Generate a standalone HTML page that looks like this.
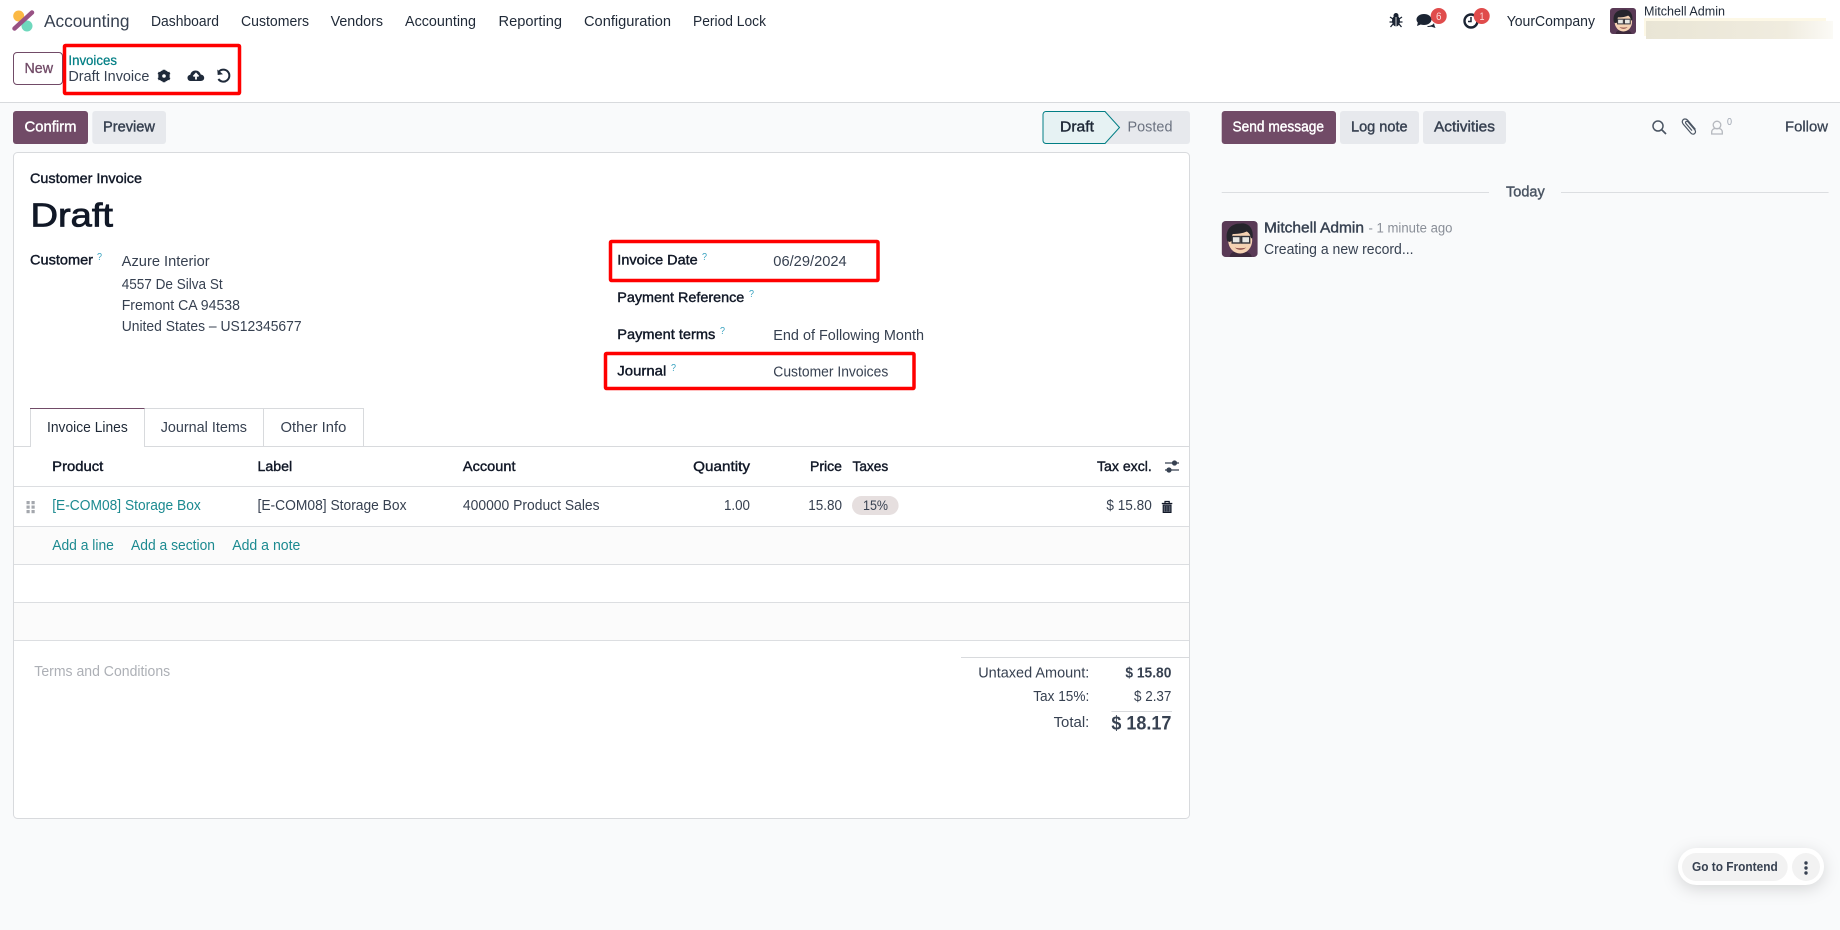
<!DOCTYPE html>
<html lang="en"><head><meta charset="utf-8"><title>Draft Invoice</title>
<style>
html,body{margin:0;padding:0;width:1840px;height:930px;overflow:hidden;background:#f9fafb}
svg{display:block}
text{font-family:"Liberation Sans",sans-serif;font-size:14.5px;fill:#374151}
.n{fill:#1f2937}
.b{fill:#1f2937;stroke:#1f2937;stroke-width:.4}
.h{fill:#111827;stroke:#111827;stroke-width:.4;font-size:14px}
.t{fill:#017e84}
.bt{fill:#374151;stroke:#374151;stroke-width:.4}
.w{fill:#fff;stroke:#fff;stroke-width:.4}
.q{fill:#3aa3c0;font-size:10px}
</style></head><body>
<svg width="1840" height="930" viewBox="0 0 1840 930" xmlns="http://www.w3.org/2000/svg">
<defs>
<linearGradient id="bl" x1="0" x2="1"><stop offset="0" stop-color="#e9e5d5"/><stop offset=".75" stop-color="#f0ecdf"/><stop offset="1" stop-color="#fbfaf6"/></linearGradient>
<symbol id="av" viewBox="0 0 36 36">
<rect width="36" height="36" rx="4" fill="#5a3a56"/>
<path d="M8 36c0-4 4-6 10-6s12 2 12 6z" fill="#3d2a3c"/>
<ellipse cx="18.500" cy="19.500" rx="12" ry="13" fill="#f5d2b3"/>
<path d="M5.500 20C3 9 9 2.500 19 2.500c6-1 13 3 12 14l-1.500 1c-1-4-2.500-6-4.500-7-4 2-10 2.500-14 2.500-1 2-1 5-1 7l-2 1z" fill="#26252c"/>
<rect x="10.500" y="15.500" width="8" height="6.500" fill="#e8e8e4" stroke="#33333a" stroke-width="1.400"/>
<rect x="20" y="15.500" width="8" height="6.500" fill="#e8e8e4" stroke="#33333a" stroke-width="1.400"/>
<path d="M13 26.500c3.500 3 8 3 11.500 0-3.500 1-8 1-11.500 0z" fill="#8b4a45"/>
</symbol>
</defs>

<!-- top area -->
<rect x="0" y="0" width="1840" height="102" fill="#fff"/>
<rect x="0" y="102" width="1840" height="1" fill="#d8dadd"/>

<!-- logo -->
<circle cx="18.700" cy="16" r="5.500" fill="#fbb945"/>
<circle cx="27" cy="26" r="5.500" fill="#6fd8bd"/>
<path d="M14.500 28.500L32 12.500" stroke="#985184" stroke-width="4.500" stroke-linecap="round"/>

<!-- nav -->
<text x="44" y="27" textLength="85.500" lengthAdjust="spacingAndGlyphs" style="font-size:17.500px">Accounting</text>
<text class="n" x="151" y="26" textLength="68" lengthAdjust="spacingAndGlyphs">Dashboard</text>
<text class="n" x="241" y="26" textLength="68" lengthAdjust="spacingAndGlyphs">Customers</text>
<text class="n" x="330.600" y="26" textLength="52.400" lengthAdjust="spacingAndGlyphs">Vendors</text>
<text class="n" x="405" y="26" textLength="71" lengthAdjust="spacingAndGlyphs">Accounting</text>
<text class="n" x="498.500" y="26" textLength="63.500" lengthAdjust="spacingAndGlyphs">Reporting</text>
<text class="n" x="584" y="26" textLength="87" lengthAdjust="spacingAndGlyphs">Configuration</text>
<text class="n" x="693" y="26" textLength="73" lengthAdjust="spacingAndGlyphs">Period Lock</text>

<!-- systray -->
<g fill="#1b2433">
<ellipse cx="1396" cy="21" rx="4" ry="5.500"/><circle cx="1396" cy="15.500" r="2.500"/>
<path d="M1390 17l3 2M1402 17l-3 2M1389.500 22h3M1402.500 22h-3M1390.500 27l2.500-3M1401.500 27l-2.500-3" stroke="#1b2433" stroke-width="1.300" fill="none"/>
<path d="M1396 17v9.500" stroke="#fff" stroke-width=".8"/>
<ellipse cx="1424" cy="19.500" rx="7.500" ry="5.500"/><path d="M1418 22l-1 4 5-2z"/>
<path d="M1427 26c3 0 6-1 7-3l.5 2.500 1 2.500-4-1.200-3.500.2z"/>
</g>
<circle cx="1471" cy="21" r="6.500" fill="none" stroke="#1b2433" stroke-width="2.400"/>
<path d="M1471 17v4.500h-3" fill="none" stroke="#1b2433" stroke-width="1.500"/>
<circle cx="1438.700" cy="16" r="8" fill="#e04c4c"/>
<text x="1436" y="20" textLength="5.500" lengthAdjust="spacingAndGlyphs" style="fill:#fbd9d9;font-size:11px">6</text>
<circle cx="1481.700" cy="16" r="8" fill="#e04c4c"/>
<text x="1479.500" y="20" textLength="5" lengthAdjust="spacingAndGlyphs" style="fill:#fbd9d9;font-size:11px">1</text>
<text class="n" x="1506.700" y="26" textLength="88.300" lengthAdjust="spacingAndGlyphs">YourCompany</text>
<use href="#av" x="1610" y="8" width="26" height="26"/>
<text class="n" x="1644" y="15.500" textLength="81" lengthAdjust="spacingAndGlyphs" style="font-size:13px">Mitchell Admin</text>
<rect x="1644" y="18" width="182" height="18" fill="#fdf8e6"/>
<rect x="1646" y="21" width="187" height="18" fill="url(#bl)"/>

<!-- control panel -->
<rect x="13.500" y="52.500" width="49" height="32" rx="3.500" fill="#fff" stroke="#714b67"/>
<text x="24.500" y="73" textLength="28.500" lengthAdjust="spacingAndGlyphs" style="fill:#714b67;stroke:#714b67;stroke-width:.3">New</text>
<text x="68.400" y="65" textLength="48.600" lengthAdjust="spacingAndGlyphs" style="fill:#017e84;stroke:#017e84;stroke-width:.25;font-size:13.500px">Invoices</text>
<text x="68.400" y="81" textLength="81" lengthAdjust="spacingAndGlyphs" style="fill:#374151">Draft Invoice</text>
<!-- gear -->
<circle cx="164" cy="76" r="4" fill="none" stroke="#1f2a3a" stroke-width="3.400"/>
<path d="M164 69.800v12.400M158.200 72.800l11.600 6.400M158.200 79.200l11.600-6.400" stroke="#1f2a3a" stroke-width="2.600"/>
<circle cx="164" cy="76" r="1.800" fill="#fff"/>
<!-- cloud -->
<path d="M190.500 81c-2 0-3-1.500-3-3.200 0-1.700 1.200-2.800 2.800-3 .5-2.600 2.700-4.300 5.200-4.300 2.600 0 4.600 1.700 5.200 4 1.900.2 3.500 1.500 3.500 3.400 0 1.900-1.500 3.100-3.400 3.100z" fill="#1f2a3a"/>
<path d="M196 79.500v-5M193.500 76.500l2.500-2.800 2.500 2.800" fill="none" stroke="#fff" stroke-width="1.800"/>
<!-- undo -->
<path d="M219 71.500a6 6 0 1 1-.6 7.500" fill="none" stroke="#1f2a3a" stroke-width="2"/>
<path d="M217.300 69.500l.4 5.500 5.300-.8z" fill="#1f2a3a"/>

<!-- action buttons -->
<rect x="13" y="111" width="75" height="33" rx="3" fill="#714b67"/>
<text class="w" x="24.500" y="131.500" textLength="52" lengthAdjust="spacingAndGlyphs">Confirm</text>
<rect x="92.300" y="111" width="73.700" height="33" rx="3" fill="#e7e9ed"/>
<text class="bt" x="103" y="131.500" textLength="52" lengthAdjust="spacingAndGlyphs">Preview</text>

<!-- status bar -->
<rect x="1100" y="111" width="90" height="33" rx="3" fill="#e7e9ed"/>
<path d="M1105 111.500H1046a3 3 0 0 0-3 3v26a3 3 0 0 0 3 3h59l14.500-16z" fill="#e6f2f3" stroke="#017e84"/>
<text class="b" x="1060" y="131.500" textLength="34" lengthAdjust="spacingAndGlyphs">Draft</text>
<text x="1127.500" y="131.500" textLength="45" lengthAdjust="spacingAndGlyphs" style="fill:#6b7280">Posted</text>

<!-- chatter buttons -->
<rect x="1221.700" y="111" width="114.300" height="33" rx="3" fill="#714b67"/>
<text class="w" x="1232.500" y="131.500" textLength="91.500" lengthAdjust="spacingAndGlyphs">Send message</text>
<rect x="1340" y="111" width="79" height="33" rx="3" fill="#e7e9ed"/>
<text class="bt" x="1351" y="131.500" textLength="56.600" lengthAdjust="spacingAndGlyphs">Log note</text>
<rect x="1423" y="111" width="83" height="33" rx="3" fill="#e7e9ed"/>
<text class="bt" x="1434" y="131.500" textLength="61" lengthAdjust="spacingAndGlyphs">Activities</text>
<!-- search -->
<circle cx="1658" cy="126" r="5" fill="none" stroke="#4b5563" stroke-width="1.500"/>
<path d="M1661.500 129.500l4.500 4.500" stroke="#4b5563" stroke-width="1.700"/>
<!-- clip -->
<path d="M1695.500 129.500l-8-9.500c-1.500-1.500-4-1.300-4.800.3-.8 1.400-.4 2.700.6 3.900l7.500 8.800c1 1.200 2.600 1.500 3.800.6 1.200-1 1.200-2.500.2-3.700l-6.800-8c-.6-.7-1.400-.8-2-.3-.6.500-.5 1.300 0 2l6 7" fill="none" stroke="#4b5563" stroke-width="1.200"/>
<!-- user -->
<circle cx="1717" cy="125" r="3.800" fill="none" stroke="#b5b8be" stroke-width="1.300"/>
<path d="M1711.700 134v-2c0-2.200 1.800-3.500 3.500-3.500h3.600c1.700 0 3.500 1.300 3.500 3.500v2z" fill="none" stroke="#b5b8be" stroke-width="1.300"/>
<text x="1727" y="125" textLength="5" lengthAdjust="spacingAndGlyphs" style="fill:#9ca3af;font-size:10px">0</text>
<text class="bt" x="1785" y="131.500" textLength="43" lengthAdjust="spacingAndGlyphs" style="stroke-width:.25">Follow</text>

<!-- sheet -->
<rect x="13.500" y="152.500" width="1176" height="666" rx="4" fill="#fff" stroke="#d8dadd"/>
<text class="h" x="30" y="183" textLength="112" lengthAdjust="spacingAndGlyphs">Customer Invoice</text>
<text x="30.500" y="226.500" textLength="82.500" lengthAdjust="spacingAndGlyphs" style="font-size:33px;fill:#111827;stroke:#111827;stroke-width:.8">Draft</text>

<text class="h" x="30" y="264.500" textLength="63" lengthAdjust="spacingAndGlyphs">Customer</text>
<text class="q" x="97" y="260" textLength="5" lengthAdjust="spacingAndGlyphs">?</text>
<text x="121.700" y="266" textLength="88" lengthAdjust="spacingAndGlyphs">Azure Interior</text>
<text x="121.700" y="289" textLength="101" lengthAdjust="spacingAndGlyphs">4557 De Silva St</text>
<text x="121.700" y="310" textLength="118.300" lengthAdjust="spacingAndGlyphs">Fremont CA 94538</text>
<text x="121.700" y="331" textLength="179.900" lengthAdjust="spacingAndGlyphs">United States – US12345677</text>

<text class="h" x="617.300" y="264.500" textLength="80.400" lengthAdjust="spacingAndGlyphs">Invoice Date</text>
<text class="q" x="702" y="260" textLength="5" lengthAdjust="spacingAndGlyphs">?</text>
<text x="773.300" y="266" textLength="73.400" lengthAdjust="spacingAndGlyphs">06/29/2024</text>
<text class="h" x="617.300" y="302" textLength="127" lengthAdjust="spacingAndGlyphs">Payment Reference</text>
<text class="q" x="749" y="297" textLength="5" lengthAdjust="spacingAndGlyphs">?</text>
<text class="h" x="617.300" y="339" textLength="98" lengthAdjust="spacingAndGlyphs">Payment terms</text>
<text class="q" x="720" y="334" textLength="5" lengthAdjust="spacingAndGlyphs">?</text>
<text x="773.300" y="340" textLength="150.700" lengthAdjust="spacingAndGlyphs">End of Following Month</text>
<text class="h" x="617.300" y="375.500" textLength="49" lengthAdjust="spacingAndGlyphs">Journal</text>
<text class="q" x="671" y="371" textLength="5" lengthAdjust="spacingAndGlyphs">?</text>
<text x="773.300" y="376.500" textLength="115" lengthAdjust="spacingAndGlyphs">Customer Invoices</text>

<!-- tabs -->
<path d="M14 446.500H1189" stroke="#d8dadd"/>
<path d="M144.500 408.500H363.500V446M263.500 408.500V446M144.500 408.500V447" fill="none" stroke="#d8dadd"/>
<path d="M30.500 447V408.500H144.500" fill="none" stroke="#d8dadd"/>
<path d="M30 408.500H144.500" stroke="#714b67"/>
<rect x="31" y="445" width="113" height="3" fill="#fff"/>
<text x="47" y="432" textLength="80.800" lengthAdjust="spacingAndGlyphs" class="n">Invoice Lines</text>
<text x="160.700" y="432" textLength="86.300" lengthAdjust="spacingAndGlyphs">Journal Items</text>
<text x="280.500" y="432" textLength="65.800" lengthAdjust="spacingAndGlyphs">Other Info</text>

<!-- table -->
<text class="h" x="52.200" y="471" textLength="51.100" lengthAdjust="spacingAndGlyphs">Product</text>
<text class="h" x="257.500" y="471" textLength="34.700" lengthAdjust="spacingAndGlyphs">Label</text>
<text class="h" x="462.900" y="471" textLength="52.600" lengthAdjust="spacingAndGlyphs">Account</text>
<text class="h" x="693.200" y="471" textLength="56.800" lengthAdjust="spacingAndGlyphs">Quantity</text>
<text class="h" x="810" y="471" textLength="32" lengthAdjust="spacingAndGlyphs">Price</text>
<text class="h" x="852.500" y="471" textLength="35.700" lengthAdjust="spacingAndGlyphs">Taxes</text>
<text class="h" x="1097" y="471" textLength="54.800" lengthAdjust="spacingAndGlyphs">Tax excl.</text>
<path d="M1165 463h14M1165 470h14" stroke="#374151" stroke-width="1.300"/>
<circle cx="1174.500" cy="463" r="2.600" fill="#374151"/><circle cx="1169" cy="470" r="2.600" fill="#374151"/>

<rect x="14" y="527" width="1175" height="37" fill="#fbfbfb"/>
<rect x="14" y="603" width="1175" height="37" fill="#fbfbfb"/>
<path d="M14 486.500H1189M14 526.500H1189M14 564.500H1189M14 602.500H1189M14 640.500H1189" stroke="#dcdee1"/>

<g fill="#a4a7ad">
<rect x="26.500" y="501" width="3.200" height="3.200"/><rect x="31.500" y="501" width="3.200" height="3.200"/>
<rect x="26.500" y="505.500" width="3.200" height="3.200"/><rect x="31.500" y="505.500" width="3.200" height="3.200"/>
<rect x="26.500" y="510" width="3.200" height="3.200"/><rect x="31.500" y="510" width="3.200" height="3.200"/>
</g>
<text x="52.200" y="510" textLength="148.600" lengthAdjust="spacingAndGlyphs" style="fill:#1c8a90">[E-COM08] Storage Box</text>
<text x="257.500" y="510" textLength="149" lengthAdjust="spacingAndGlyphs">[E-COM08] Storage Box</text>
<text x="462.900" y="510" textLength="136.700" lengthAdjust="spacingAndGlyphs">400000 Product Sales</text>
<text x="724" y="510" textLength="26" lengthAdjust="spacingAndGlyphs">1.00</text>
<text x="808.200" y="510" textLength="33.800" lengthAdjust="spacingAndGlyphs">15.80</text>
<rect x="852" y="496" width="46.600" height="19" rx="9.500" fill="#e6dfdf"/>
<text x="863" y="510" textLength="25" lengthAdjust="spacingAndGlyphs" style="font-size:13.500px">15%</text>
<text x="1106.400" y="510" textLength="45.400" lengthAdjust="spacingAndGlyphs">$ 15.80</text>
<path d="M1161.800 503.500h10.500M1165 503.300v-1.800h4.200v1.800" fill="none" stroke="#111827" stroke-width="1.200"/>
<path d="M1163.200 505h7.800v7.500h-7.800z" fill="#5b6270" stroke="#111827" stroke-width="1.100"/>
<path d="M1165.500 506v5.500M1167.100 506v5.500M1168.700 506v5.500" stroke="#111827" stroke-width=".7"/>

<text x="52.200" y="550" textLength="61.700" lengthAdjust="spacingAndGlyphs" style="fill:#1c8a90">Add a line</text>
<text x="131" y="550" textLength="84" lengthAdjust="spacingAndGlyphs" style="fill:#1c8a90">Add a section</text>
<text x="232.200" y="550" textLength="68.200" lengthAdjust="spacingAndGlyphs" style="fill:#1c8a90">Add a note</text>

<text x="34.300" y="676" textLength="135.900" lengthAdjust="spacingAndGlyphs" style="fill:#adb0b6">Terms and Conditions</text>

<!-- totals -->
<path d="M961 657.500H1189" stroke="#d8dadd"/>
<text x="978.200" y="677.700" textLength="111.100" lengthAdjust="spacingAndGlyphs">Untaxed Amount:</text>
<text class="bt" x="1125.400" y="677.700" textLength="46" lengthAdjust="spacingAndGlyphs" style="font-weight:700;stroke-width:0">$ 15.80</text>
<text x="1033.200" y="701" textLength="56.100" lengthAdjust="spacingAndGlyphs">Tax 15%:</text>
<text x="1134" y="701" textLength="37.400" lengthAdjust="spacingAndGlyphs">$ 2.37</text>
<path d="M1111.400 711.500H1172" stroke="#d8dadd"/>
<text x="1053.600" y="727" textLength="35.700" lengthAdjust="spacingAndGlyphs">Total:</text>
<text class="bt" x="1111.400" y="729.500" textLength="60" lengthAdjust="spacingAndGlyphs" style="font-size:19px;font-weight:700;stroke-width:0">$ 18.17</text>

<!-- red boxes (above sheet) -->
<rect x="64.500" y="45.500" width="175" height="48" fill="none" stroke="#f00" stroke-width="3.500" rx="1"/>
<rect x="610.500" y="241.500" width="267.500" height="39" fill="none" stroke="#f00" stroke-width="3.500" rx="1"/>
<rect x="605.500" y="353.500" width="308.500" height="35" fill="none" stroke="#f00" stroke-width="3.500" rx="1"/>

<!-- chatter -->
<path d="M1221.700 192.500H1489M1561 192.500H1828.600" stroke="#dcdee1"/>
<text class="bt" x="1506" y="196.500" textLength="38.700" lengthAdjust="spacingAndGlyphs" style="fill:#4b5563;stroke:#4b5563">Today</text>
<use href="#av" x="1221.700" y="221" width="36" height="36"/>
<text class="bt" x="1264" y="232.500" textLength="100" lengthAdjust="spacingAndGlyphs">Mitchell Admin</text>
<text x="1368.500" y="232.500" textLength="84" lengthAdjust="spacingAndGlyphs" style="fill:#8a8f98;font-size:13.500px">- 1 minute ago</text>
<text x="1264" y="254" textLength="149.500" lengthAdjust="spacingAndGlyphs">Creating a new record...</text>

<!-- floating pill -->
<rect x="1678" y="848" width="146" height="37" rx="18.500" fill="#fff" style="filter:drop-shadow(0 4px 8px rgba(0,0,0,.14))"/>
<rect x="1682" y="853" width="105.700" height="28" rx="14" fill="#f2f2f2"/>
<text class="bt" x="1692" y="871" textLength="85.700" lengthAdjust="spacingAndGlyphs" style="font-size:12.500px;font-weight:700;stroke-width:0">Go to Frontend</text>
<circle cx="1806" cy="867" r="14" fill="#f2f2f2"/>
<circle cx="1806" cy="863" r="1.700" fill="#374151"/><circle cx="1806" cy="868" r="1.700" fill="#374151"/><circle cx="1806" cy="873" r="1.700" fill="#374151"/>
</svg>
</body></html>
